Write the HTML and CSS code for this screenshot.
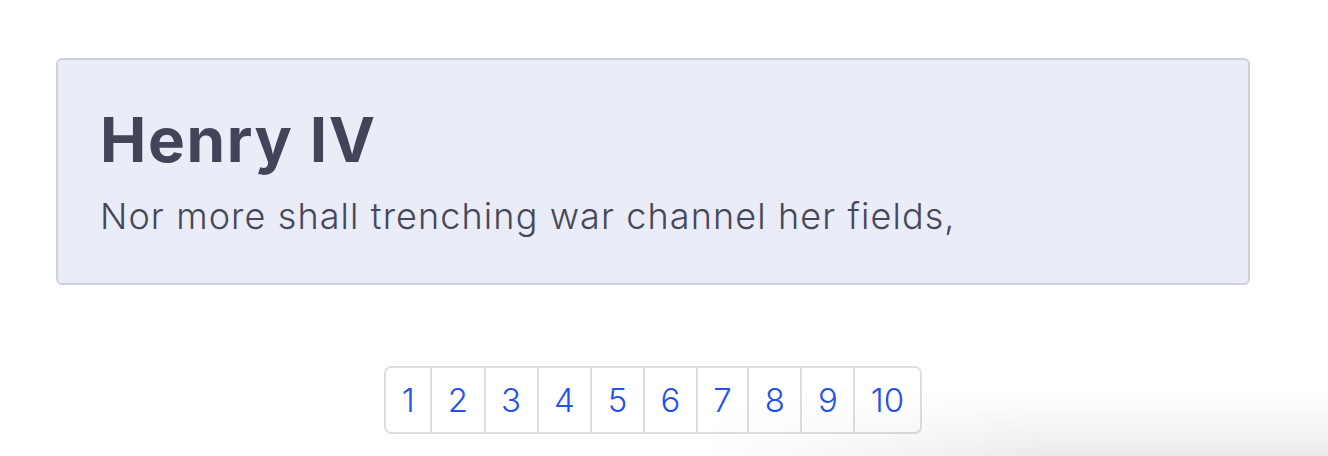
FILE: index.html
```html
<!DOCTYPE html>
<html>
<head>
<meta charset="utf-8">
<link rel="stylesheet" href="styles.css">
</head>
<body>
<main class="page">
  <section class="card">
    <h1 class="title">Henry IV</h1>
    <p class="quote">Nor more shall trenching war channel her fields,</p>
  </section>
  <nav class="pager">
    <a class="page-link">1</a>
    <a class="page-link">2</a>
    <a class="page-link">3</a>
    <a class="page-link">4</a>
    <a class="page-link">5</a>
    <a class="page-link">6</a>
    <a class="page-link">7</a>
    <a class="page-link">8</a>
    <a class="page-link">9</a>
    <a class="page-link">10</a>
  </nav>
</main>
<div class="corner-shade"></div>
</body>
</html>
```
FILE: styles.css
```css
html, body {
  margin: 0;
  padding: 0;
  background: #ffffff;
  overflow: hidden;
}
body {
  width: 1328px;
  height: 456px;
  position: relative;
  font-family: Inter, "Open Sans", sans-serif;
  color: #434558;
}
.page {
  box-sizing: border-box;
  width: 1328px;
  padding: 58px 0 0 56px;
  display: flex;
  flex-direction: column;
  align-items: flex-start;
}
.card {
  box-sizing: border-box;
  width: 1194px;
  height: 227px;
  background: #eaecf8;
  border: 2px solid #cfd1de;
  border-radius: 6px;
  padding: 40px 42px;
}
.title {
  margin: 0;
  font-size: 62px;
  font-weight: 700;
  line-height: 80px;
  letter-spacing: 1.6px;
  color: #424458;
}
.quote {
  margin: 14px 0 0;
  font-size: 36px;
  font-weight: 300;
  line-height: 44px;
  color: #464859;
  letter-spacing: 1.1px;
}
.pager {
  align-self: center;
  width: max-content;
  margin: 81px 0 0 0;
  position: relative;
  left: -39px;
  display: flex;
  border: 2px solid #dcdee3;
  border-radius: 7px;
  background: #fff;
  height: 64px;
}
.page-link {
  display: flex;
  align-items: center;
  justify-content: center;
  padding: 0 15.5px;
  font-size: 33px;
  font-weight: 300;
  color: #2452ee;
  border-left: 2px solid #dcdee3;
}
.page-link:first-child {
  border-left: none;
}
.corner-shade {
  position: absolute;
  left: 700px;
  top: 390px;
  width: 628px;
  height: 66px;
  background: linear-gradient(to bottom, rgba(0,0,0,0) 0%, rgba(0,0,0,0.03) 45%, rgba(0,0,0,0.08) 100%);
  -webkit-mask-image: linear-gradient(to right, transparent 0%, #000 55%);
  mask-image: linear-gradient(to right, transparent 0%, #000 55%);
  pointer-events: none;
}
```
